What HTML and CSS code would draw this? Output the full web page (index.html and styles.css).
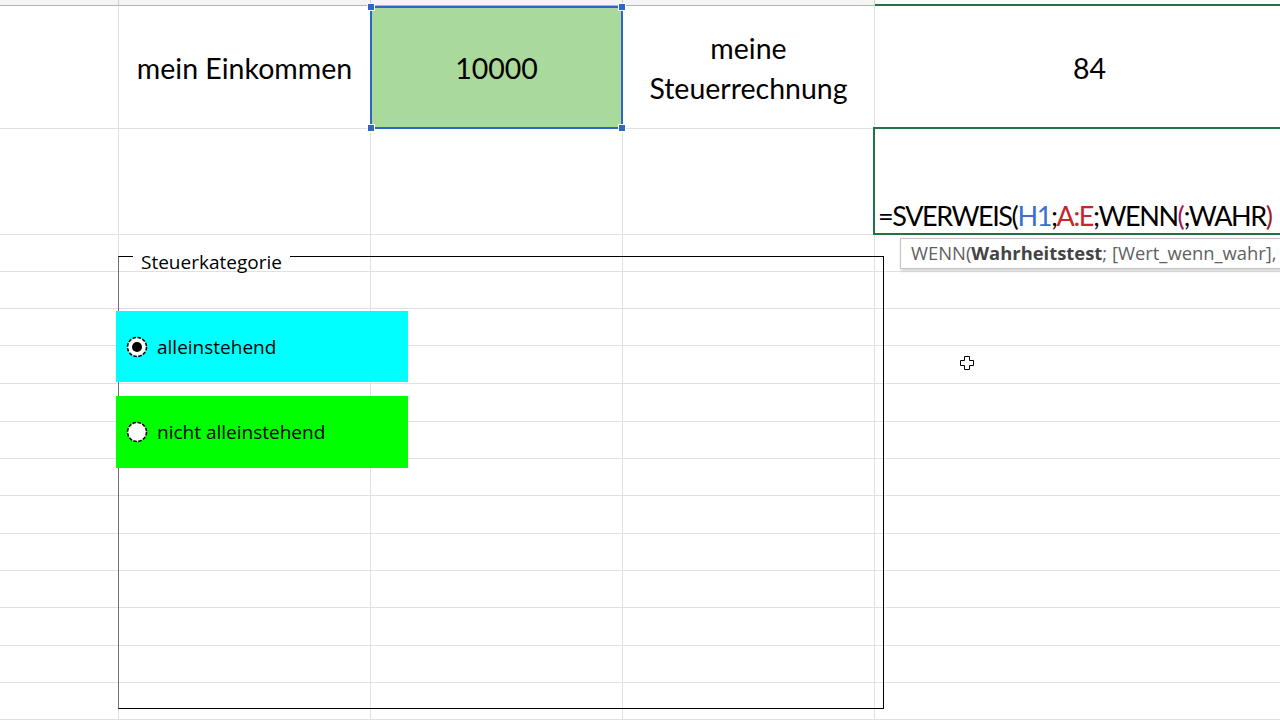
FILE: index.html
```html
<!DOCTYPE html>
<html lang="de">
<head>
<meta charset="utf-8">
<title>Steuerrechnung</title>
<link rel="stylesheet" href="styles.css">
</head>
<body>
<div class="sheet">
  <div class="row hdr"><div class="c"></div><div class="c"></div><div class="c"></div><div class="c"></div><div class="c active-col"></div></div>
  <div class="row r1">
    <div class="c"></div>
    <div class="c txt">mein Einkommen</div>
    <div class="c txt ref-cell">10000<span class="ref-box"><i class="h tl"></i><i class="h tr"></i><i class="h bl"></i><i class="h br"></i></span></div>
    <div class="c txt wrap">meine<br>Steuerrechnung</div>
    <div class="c txt">84</div>
  </div>
  <div class="row r2">
    <div class="c"></div><div class="c"></div><div class="c"></div><div class="c"></div>
    <div class="c edit"><span class="formula">=SVERWEIS(<span class="blue">H1</span>;<span class="red">A:E</span>;WENN<span class="plum">(</span>;WAHR<span class="maroon">)</span></span></div>
  </div>
  <div class="row h37"><div class="c"></div><div class="c"></div><div class="c"></div><div class="c"></div><div class="c"></div></div>
  <div class="row h37"><div class="c"></div><div class="c"></div><div class="c"></div><div class="c"></div><div class="c"></div></div>
  <div class="row h37"><div class="c"></div><div class="c"></div><div class="c"></div><div class="c"></div><div class="c"></div></div>
  <div class="row h38"><div class="c"></div><div class="c"></div><div class="c"></div><div class="c"></div><div class="c"></div></div>
  <div class="row h38"><div class="c"></div><div class="c"></div><div class="c"></div><div class="c"></div><div class="c"></div></div>
  <div class="row h37"><div class="c"></div><div class="c"></div><div class="c"></div><div class="c"></div><div class="c"></div></div>
  <div class="row h37"><div class="c"></div><div class="c"></div><div class="c"></div><div class="c"></div><div class="c"></div></div>
  <div class="row h38"><div class="c"></div><div class="c"></div><div class="c"></div><div class="c"></div><div class="c"></div></div>
  <div class="row h37"><div class="c"></div><div class="c"></div><div class="c"></div><div class="c"></div><div class="c"></div></div>
  <div class="row h37"><div class="c"></div><div class="c"></div><div class="c"></div><div class="c"></div><div class="c"></div></div>
  <div class="row h38"><div class="c"></div><div class="c"></div><div class="c"></div><div class="c"></div><div class="c"></div></div>
  <div class="row h37"><div class="c"></div><div class="c"></div><div class="c"></div><div class="c"></div><div class="c"></div></div>
  <div class="row h37"><div class="c"></div><div class="c"></div><div class="c"></div><div class="c"></div><div class="c"></div></div>

  <div class="tooltip">WENN(<b>Wahrheitstest</b>; [Wert_wenn_wahr],</div>

  <div class="groupbox">
    <span class="gb-label">Steuerkategorie</span>
  </div>

  <div class="opt opt-cyan">
    <svg class="radio" width="22" height="22" viewBox="0 0 22 22"><circle cx="11" cy="11" r="9.5" fill="#fff" stroke="#000" stroke-width="1.6" stroke-dasharray="3.5 1.5"/><circle cx="11" cy="11" r="5" fill="#000"/></svg>
    <span>alleinstehend</span>
  </div>
  <div class="opt opt-green">
    <svg class="radio" width="22" height="22" viewBox="0 0 22 22"><circle cx="11" cy="11" r="9.5" fill="#fff" stroke="#000" stroke-width="1.6" stroke-dasharray="3.5 1.5"/></svg>
    <span>nicht alleinstehend</span>
  </div>

  <svg class="cursor" width="14" height="14" viewBox="0 0 14 14"><path d="M4.5 0.5h5v4h4v5h-4v4h-5v-4h-4v-5h4z" fill="#fff" stroke="#000" stroke-width="1"/></svg>
</div>
</body>
</html>
```

FILE: styles.css
```css
html, body {
  margin: 0;
  padding: 0;
  background: #fff;
  overflow: hidden;
}
.sheet {
  position: relative;
  width: 1280px;
  height: 720px;
  overflow: hidden;
  font-family: Lato, "Liberation Sans", sans-serif;
  color: #000;
}
.row {
  display: grid;
  grid-template-columns: 119px 252px 252px 252px 430px;
  width: 1305px;
}
.c {
  box-sizing: border-box;
  border-right: 1px solid #e1e1e1;
  border-bottom: 1px solid #e1e1e1;
  min-width: 0;
}
.hdr { height: 6px; }
.hdr .c {
  background: #f4f4f4;
  border-bottom: 1px solid #b4b4b4;
  border-right: 1px solid #cfcfcf;
}
.hdr .active-col {
  background: #fafafa;
  border-bottom: none;
  box-shadow: inset 0 -2px 0 #217346;
}
.r1 { height: 123px; }
.r2 { height: 106px; }
.h37 { height: 37px; }
.h38 { height: 38px; }
.txt {
  display: flex;
  align-items: center;
  justify-content: center;
  text-align: center;
  padding-top: 2px;
  font-size: 28.5px;
  line-height: 40px;
  white-space: nowrap;
}
.ref-cell {
  position: relative;
  background: #a9d99b;
}
.ref-box {
  position: absolute;
  top: 0;
  left: -1px;
  right: -1px;
  bottom: -1px;
  border: 2px solid #2f66c4;
}
.h {
  position: absolute;
  width: 6px;
  height: 6px;
  background: #2f66c4;
  border: 1px solid #fff;
}
.tl { left: -5px; top: -5px; }
.tr { right: -5px; top: -5px; }
.bl { left: -5px; bottom: -5px; }
.br { right: -5px; bottom: -5px; }
.edit {
  position: relative;
  display: flex;
  align-items: flex-end;
  overflow: visible;
}
.edit::after {
  content: "";
  position: absolute;
  left: -2px;
  top: -2px;
  right: -1px;
  bottom: -1px;
  border: 2px solid #217346;
}
.formula {
  padding-left: 3px;
  font-size: 27px;
  letter-spacing: -1.4px;
  line-height: 36px;
  white-space: nowrap;
}
.blue { color: #3d6fd1; }
.red { color: #c7252f; }
.plum { color: #a3195b; }
.maroon { color: #9f1b2b; }
.tooltip {
  position: absolute;
  left: 900px;
  top: 238px;
  width: 420px;
  height: 31px;
  box-sizing: border-box;
  background: #fff;
  border: 1px solid #c3c3c3;
  box-shadow: 1px 2px 3px rgba(0,0,0,0.18);
  padding-left: 10px;
  font-family: "Open Sans", "Noto Sans", sans-serif;
  font-size: 18.4px;
  line-height: 27px;
  color: #5f5f5f;
  white-space: nowrap;
}
.tooltip b { color: #444; font-weight: 700; }
.groupbox {
  position: absolute;
  left: 118px;
  top: 256px;
  width: 766px;
  height: 453px;
  box-sizing: border-box;
  border: 1px solid #000;
  border-left-color: #707070;
}
.gb-label {
  position: absolute;
  left: 14px;
  top: -2px;
  padding: 0 8px;
  background: #fff;
  font-family: "Open Sans", "Noto Sans", sans-serif;
  font-size: 19px;
  line-height: 14px;
  color: #000;
}
.opt {
  position: absolute;
  left: 116px;
  width: 292px;
  display: flex;
  align-items: center;
  gap: 9px;
  padding-left: 10px;
  box-sizing: border-box;
  font-family: "Open Sans", "Noto Sans", sans-serif;
  font-size: 19px;
  color: #000;
}
.opt-cyan {
  top: 311px;
  height: 71px;
  background: #00ffff;
}
.opt-green {
  top: 396px;
  height: 72px;
  background: #00ff00;
}
.radio { flex: none; }
.cursor {
  position: absolute;
  left: 960px;
  top: 356px;
}
```
